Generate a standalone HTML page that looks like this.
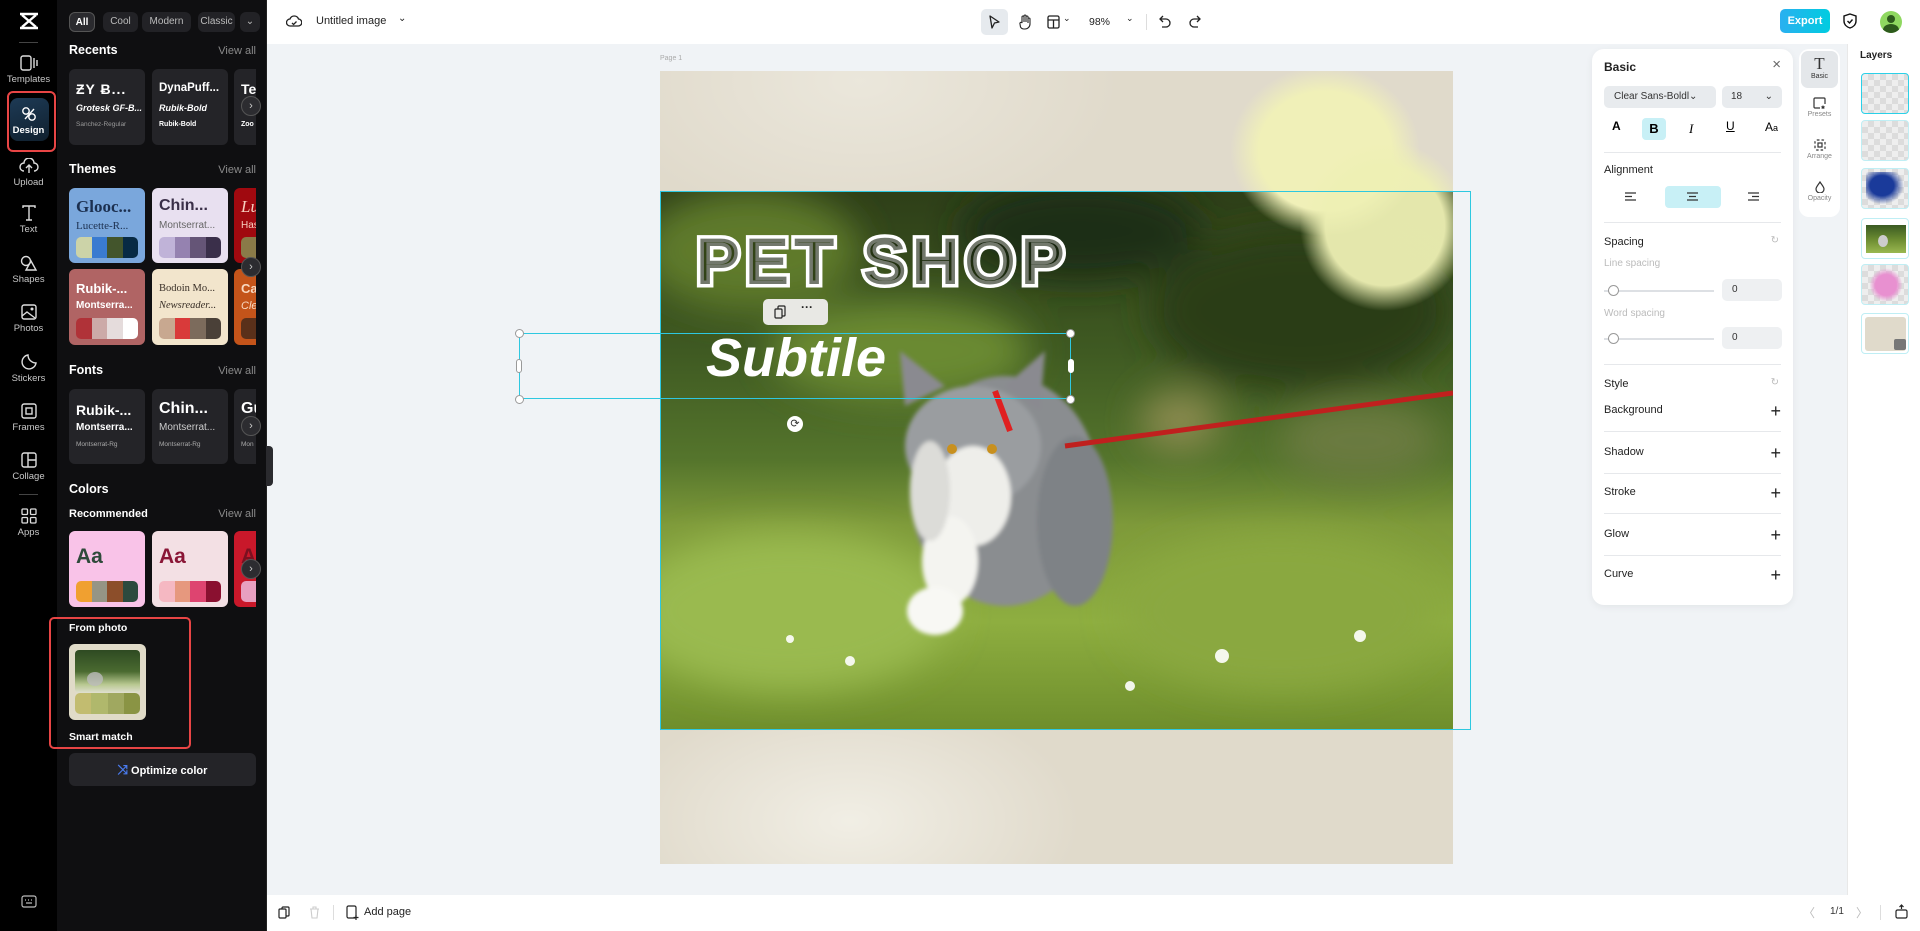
<!DOCTYPE html>
<html><head><meta charset="utf-8">
<style>
*{box-sizing:border-box;margin:0;padding:0}
body{width:1920px;height:931px;overflow:hidden;font-family:"Liberation Sans",sans-serif;background:#f0f3f6;position:relative}
.abs{position:absolute}
#rail{left:0;top:0;width:57px;height:931px;background:#000}
.ri{position:absolute;left:0;width:57px;text-align:center;color:#c8c8c8;font-size:9.5px}
.ri svg{display:block;margin:0 auto 3px}
#panel{left:57px;top:0;width:210px;height:931px;background:#0f0f11;border-right:1px solid #222}
.h{position:absolute;left:69px;color:#fff;font-weight:bold;font-size:12.5px}
.va{position:absolute;right:1664px;color:#8a8a8a;font-size:11px}
.clip{position:absolute;left:69px;width:187px;overflow:hidden}
.card{position:absolute;width:76px;border-radius:6px;overflow:hidden}
.sw{position:absolute;left:7px;right:7px;height:21px;border-radius:5px;overflow:hidden;display:flex}
.sw i{flex:1}
.nx{position:absolute;left:241px;width:20px;height:20px;border-radius:50%;background:#2c2c30;border:1px solid #555;color:#ccc;font-size:11px;text-align:center;line-height:18px}
.chip{position:absolute;top:12px;height:20px;border-radius:6px;background:#222226;color:#bbb;font-size:10px;line-height:20px;text-align:center}
#top{left:267px;top:0;width:1653px;height:44px;background:#fff}
#bottom{left:267px;top:895px;width:1653px;height:36px;background:#fff}
#props{left:1592px;top:49px;width:201px;height:556px;background:#fff;border-radius:12px;box-shadow:0 2px 8px rgba(0,0,0,.06)}
.pl{position:absolute;left:12px;font-size:11px;color:#222}
.dv{position:absolute;left:12px;right:12px;height:1px;background:#e6e8eb}
.plus{position:absolute;right:12px;font-size:18px;color:#222;font-weight:300;line-height:14px}
#tabs{left:1799px;top:49px;width:41px;height:168px;background:#fff;border-radius:10px}
.tb{position:absolute;left:0;width:41px;text-align:center;font-size:7px;color:#888}
#layers{left:1847px;top:44px;width:73px;height:851px;background:#fff;border-left:1px solid #e8e8e8}
.ly{position:absolute;left:13px;width:48px;height:41px;border-radius:4px;border:1px solid #bfeef4;overflow:hidden;
background-color:#eee;background-image:linear-gradient(45deg,#dcdcdc 25%,transparent 25%,transparent 75%,#dcdcdc 75%),linear-gradient(45deg,#dcdcdc 25%,transparent 25%,transparent 75%,#dcdcdc 75%);background-size:12px 12px;background-position:0 0,6px 6px}
</style></head><body>

<!-- RAIL -->
<div id="rail" class="abs">
  <div class="ri" style="top:12px"><svg width="22" height="18" viewBox="0 0 22 18"><path d="M2 2 L20 2 M2 16 L20 16 M4 3 Q11 9 18 15 M18 3 Q11 9 4 15" stroke="#fff" stroke-width="2.4" fill="none"/></svg></div>
  <div style="position:absolute;left:19px;top:42px;width:19px;height:1px;background:#444"></div>
  <div class="ri" style="top:55px"><svg width="18" height="16" viewBox="0 0 18 16"><rect x="1" y="1" width="10" height="14" rx="2" stroke="#ddd" fill="none" stroke-width="1.4"/><path d="M14 3v10M17 5v6" stroke="#ddd" stroke-width="1.4"/></svg>Templates</div>
  <div style="position:absolute;left:10px;top:98px;width:39px;height:43px;border-radius:8px;background:linear-gradient(160deg,#1d3a55,#10202e)"></div>
  <div style="position:absolute;left:7px;top:91px;width:49px;height:61px;border:2.5px solid #e84545;border-radius:6px"></div>
  <div class="ri" style="top:106px;color:#fff;font-weight:bold"><svg width="16" height="16" viewBox="0 0 16 16"><circle cx="5" cy="5" r="3.2" stroke="#fff" fill="none" stroke-width="1.4"/><circle cx="11" cy="11" r="3.2" stroke="#fff" fill="none" stroke-width="1.4"/><path d="M4 13 L13 3" stroke="#fff" stroke-width="1.4"/></svg>Design</div>
  <div class="ri" style="top:158px"><svg width="20" height="16" viewBox="0 0 20 16"><path d="M5 13 A4 4 0 0 1 5 5 A5 5 0 0 1 15 5 A4 4 0 0 1 15 13" stroke="#ddd" fill="none" stroke-width="1.4"/><path d="M10 15V8M7 10l3-3 3 3" stroke="#ddd" fill="none" stroke-width="1.4"/></svg>Upload</div>
  <div class="ri" style="top:205px"><svg width="16" height="16" viewBox="0 0 16 16"><path d="M2 3V1h12v2M8 1v14M5 15h6" stroke="#ddd" fill="none" stroke-width="1.4"/></svg>Text</div>
  <div class="ri" style="top:255px"><svg width="18" height="16" viewBox="0 0 18 16"><circle cx="6" cy="6" r="4.5" stroke="#ddd" fill="none" stroke-width="1.4"/><path d="M11 6 L16 15 H6 Z" stroke="#ddd" fill="none" stroke-width="1.4"/></svg>Shapes</div>
  <div class="ri" style="top:304px"><svg width="16" height="16" viewBox="0 0 16 16"><rect x="1" y="1" width="14" height="14" rx="2" stroke="#ddd" fill="none" stroke-width="1.4"/><path d="M1 12l5-4 8 6" stroke="#ddd" fill="none" stroke-width="1.4"/><circle cx="11" cy="5" r="1.5" fill="#ddd"/></svg>Photos</div>
  <div class="ri" style="top:354px"><svg width="16" height="16" viewBox="0 0 16 16"><path d="M15 9A7 7 0 1 1 7 1 A8 8 0 0 0 15 9Z" stroke="#ddd" fill="none" stroke-width="1.4"/></svg>Stickers</div>
  <div class="ri" style="top:403px"><svg width="16" height="16" viewBox="0 0 16 16"><rect x="1" y="1" width="14" height="14" rx="2" stroke="#ddd" fill="none" stroke-width="1.4"/><rect x="5" y="5" width="6" height="6" stroke="#ddd" fill="none" stroke-width="1.4"/></svg>Frames</div>
  <div class="ri" style="top:452px"><svg width="16" height="16" viewBox="0 0 16 16"><rect x="1" y="1" width="14" height="14" rx="2" stroke="#ddd" fill="none" stroke-width="1.4"/><path d="M7 1v14M7 8h8" stroke="#ddd" stroke-width="1.4"/></svg>Collage</div>
  <div style="position:absolute;left:19px;top:494px;width:19px;height:1px;background:#444"></div>
  <div class="ri" style="top:508px"><svg width="16" height="16" viewBox="0 0 16 16"><rect x="1" y="1" width="5.5" height="5.5" rx="1" stroke="#ddd" fill="none" stroke-width="1.3"/><rect x="9.5" y="1" width="5.5" height="5.5" rx="1" stroke="#ddd" fill="none" stroke-width="1.3"/><rect x="1" y="9.5" width="5.5" height="5.5" rx="1" stroke="#ddd" fill="none" stroke-width="1.3"/><rect x="9.5" y="9.5" width="5.5" height="5.5" rx="1" stroke="#ddd" fill="none" stroke-width="1.3"/></svg>Apps</div>
  <div class="ri" style="top:895px"><svg width="16" height="13" viewBox="0 0 16 13"><rect x="1" y="1" width="14" height="11" rx="2" stroke="#bbb" fill="none" stroke-width="1.2"/><path d="M4 5h1M7 5h1M10 5h1M5 8h6" stroke="#bbb" stroke-width="1.2"/></svg></div>
</div>

<!-- PANEL -->
<div id="panel" class="abs"></div>
<div class="chip" style="left:69px;width:26px;background:#2a2a2e;border:1px solid #555;color:#fff;font-weight:bold">All</div>
<div class="chip" style="left:103px;width:35px">Cool</div>
<div class="chip" style="left:142px;width:49px">Modern</div>
<div class="chip" style="left:198px;width:37px;overflow:hidden">Classic</div>
<div class="chip" style="left:240px;width:20px">⌄</div>

<div class="h" style="top:43px">Recents</div><div class="va" style="top:45px">View all</div>
<div class="clip" style="top:69px;height:77px">
  <div class="card" style="left:0;top:0;height:76px;background:#242428">
    <div class="abs" style="left:7px;top:12px;color:#fff;font-weight:bold;font-size:14px;letter-spacing:1px">ƵY Ƀ...</div>
    <div class="abs" style="left:7px;top:34px;color:#fff;font-weight:bold;font-style:italic;font-size:9px">Grotesk GF-B...</div>
    <div class="abs" style="left:7px;top:52px;color:#999;font-size:6.5px">Sanchez-Regular</div>
  </div>
  <div class="card" style="left:83px;top:0;height:76px;background:#242428">
    <div class="abs" style="left:7px;top:13px;color:#fff;font-weight:bold;font-size:11.5px">DynaPuff...</div>
    <div class="abs" style="left:7px;top:34px;color:#fff;font-weight:bold;font-style:italic;font-size:9px">Rubik-Bold</div>
    <div class="abs" style="left:7px;top:52px;color:#fff;font-weight:bold;font-size:7px">Rubik-Bold</div>
  </div>
  <div class="card" style="left:165px;top:0;height:76px;background:#242428">
    <div class="abs" style="left:7px;top:12px;color:#fff;font-weight:bold;font-size:14px">Te</div>
    <div class="abs" style="left:7px;top:52px;color:#fff;font-weight:bold;font-size:7px">Zoo</div>
  </div>
</div>
<div class="nx" style="top:96px">›</div>

<div class="h" style="top:162px">Themes</div><div class="va" style="top:164px">View all</div>
<div class="clip" style="top:188px;height:158px">
  <div class="card" style="left:0;top:0;height:75px;background:#7aa7dc">
    <div class="abs" style="left:7px;top:9px;color:#1c3050;font-family:'Liberation Serif',serif;font-weight:bold;font-size:17px">Glooc...</div>
    <div class="abs" style="left:7px;top:32px;color:#1c3050;font-family:'Liberation Serif',serif;font-size:11px">Lucette-R...</div>
    <div class="sw" style="top:49px"><i style="background:#ccd3a8"></i><i style="background:#3a7bd0"></i><i style="background:#43552c"></i><i style="background:#072a44"></i></div>
  </div>
  <div class="card" style="left:83px;top:0;height:75px;background:#e8e0f0">
    <div class="abs" style="left:7px;top:9px;color:#3a2f48;font-weight:bold;font-size:16px">Chin...</div>
    <div class="abs" style="left:7px;top:32px;color:#666;font-size:10px">Montserrat...</div>
    <div class="sw" style="top:49px"><i style="background:#c0b3d8"></i><i style="background:#9582b0"></i><i style="background:#655577"></i><i style="background:#3a2f4a"></i></div>
  </div>
  <div class="card" style="left:165px;top:0;height:75px;background:#a0090f">
    <div class="abs" style="left:7px;top:9px;color:#f6d0c0;font-family:'Liberation Serif',serif;font-style:italic;font-size:17px">Lu</div>
    <div class="abs" style="left:7px;top:32px;color:#f6d0c0;font-size:10px">Has</div>
    <div class="sw" style="top:49px"><i style="background:#8a7a48"></i></div>
  </div>
  <div class="card" style="left:0;top:81px;height:76px;background:#b06464">
    <div class="abs" style="left:7px;top:12px;color:#fff;font-weight:bold;font-size:13px">Rubik-...</div>
    <div class="abs" style="left:7px;top:31px;color:#fff;font-weight:bold;font-size:10px">Montserra...</div>
    <div class="sw" style="top:49px"><i style="background:#b03238"></i><i style="background:#ccaaa8"></i><i style="background:#e5dcdc"></i><i style="background:#fff"></i></div>
  </div>
  <div class="card" style="left:83px;top:81px;height:76px;background:#f2e5cc">
    <div class="abs" style="left:7px;top:14px;color:#3a3028;font-family:'Liberation Serif',serif;font-size:10.5px">Bodoin Mo...</div>
    <div class="abs" style="left:7px;top:31px;color:#3a3028;font-family:'Liberation Serif',serif;font-style:italic;font-size:10.5px">Newsreader...</div>
    <div class="sw" style="top:49px"><i style="background:#c8a890"></i><i style="background:#d93a3a"></i><i style="background:#7c6b5c"></i><i style="background:#4a4038"></i></div>
  </div>
  <div class="card" style="left:165px;top:81px;height:76px;background:#c4541a">
    <div class="abs" style="left:7px;top:12px;color:#f8d8c0;font-weight:bold;font-size:13px">Ca</div>
    <div class="abs" style="left:7px;top:31px;color:#f8d8c0;font-style:italic;font-size:11px">Cle</div>
    <div class="sw" style="top:49px"><i style="background:#5a301a"></i></div>
  </div>
</div>
<div class="nx" style="top:257px">›</div>

<div class="h" style="top:363px">Fonts</div><div class="va" style="top:365px">View all</div>
<div class="clip" style="top:389px;height:76px">
  <div class="card" style="left:0;top:0;height:75px;background:#242428">
    <div class="abs" style="left:7px;top:13px;color:#fff;font-weight:bold;font-size:14px">Rubik-...</div>
    <div class="abs" style="left:7px;top:33px;color:#fff;font-weight:bold;font-size:10px">Montserra...</div>
    <div class="abs" style="left:7px;top:52px;color:#aaa;font-size:6.5px">Montserrat-Rg</div>
  </div>
  <div class="card" style="left:83px;top:0;height:75px;background:#242428">
    <div class="abs" style="left:7px;top:11px;color:#fff;font-weight:bold;font-size:16px">Chin...</div>
    <div class="abs" style="left:7px;top:33px;color:#ccc;font-size:10px">Montserrat...</div>
    <div class="abs" style="left:7px;top:52px;color:#aaa;font-size:6.5px">Montserrat-Rg</div>
  </div>
  <div class="card" style="left:165px;top:0;height:75px;background:#242428">
    <div class="abs" style="left:7px;top:11px;color:#fff;font-weight:bold;font-size:16px">Gu</div>
    <div class="abs" style="left:7px;top:52px;color:#aaa;font-size:6.5px">Mon</div>
  </div>
</div>
<div class="nx" style="top:416px">›</div>

<div class="h" style="top:482px">Colors</div>
<div class="h" style="top:508px;font-size:11px">Recommended</div><div class="va" style="top:508px">View all</div>
<div class="clip" style="top:531px;height:77px">
  <div class="card" style="left:0;top:0;height:76px;background:#f9c3e8">
    <div class="abs" style="left:7px;top:14px;color:#2e4a3a;font-weight:bold;font-size:21px">Aa</div>
    <div class="sw" style="top:50px"><i style="background:#f0a030"></i><i style="background:#959585"></i><i style="background:#8c4e2a"></i><i style="background:#2c4a3e"></i></div>
  </div>
  <div class="card" style="left:83px;top:0;height:76px;background:#f3e0e4">
    <div class="abs" style="left:7px;top:14px;color:#8a1636;font-weight:bold;font-size:21px">Aa</div>
    <div class="sw" style="top:50px"><i style="background:#f5b8c2"></i><i style="background:#e6987e"></i><i style="background:#de4470"></i><i style="background:#8a1030"></i></div>
  </div>
  <div class="card" style="left:165px;top:0;height:76px;background:#c9182a">
    <div class="abs" style="left:7px;top:14px;color:#7a1020;font-weight:bold;font-size:21px">A</div>
    <div class="sw" style="top:50px"><i style="background:#e8a0c0"></i></div>
  </div>
</div>
<div class="nx" style="top:559px">›</div>

<div class="abs" style="left:49px;top:617px;width:142px;height:132px;border:2.5px solid #e84545;border-radius:5px"></div>
<div class="h" style="top:622px;font-size:10.5px">From photo</div>
<div class="abs" style="left:69px;top:644px;width:77px;height:76px;border-radius:6px;background:#e0dbc8;overflow:hidden">
  <div class="abs" style="left:6px;top:6px;width:65px;height:43px;border-radius:4px;background:linear-gradient(180deg,#2e4a22 0%,#4a6a30 50%,#b8c890 80%,#e0e0d0 100%)"></div>
  <div class="abs" style="left:18px;top:28px;width:16px;height:14px;border-radius:50%;background:#bbb;opacity:.8"></div>
  <div class="sw" style="top:49px;left:6px;right:6px"><i style="background:#c2bc70"></i><i style="background:#b0b86c"></i><i style="background:#a0a860"></i><i style="background:#8a9444"></i></div>
</div>
<div class="h" style="top:731px;font-size:10.5px">Smart match</div>
<div class="abs" style="left:69px;top:753px;width:187px;height:33px;border-radius:6px;background:#242428;color:#fff;font-weight:bold;font-size:11px;text-align:center;line-height:33px"><span style="color:#4a7cf0;font-size:13px">⤨</span> Optimize color</div>
<div class="abs" style="left:266px;top:446px;width:7px;height:40px;background:#2a2a2e;border-radius:0 4px 4px 0"></div>

<!-- TOP BAR -->
<div id="top" class="abs"></div>
<svg class="abs" style="left:286px;top:13px" width="16" height="16" viewBox="0 0 16 16"><path d="M4 13A3.5 3.5 0 0 1 4 6 A4.5 4.5 0 0 1 12.5 6 A3.5 3.5 0 0 1 12 13Z" stroke="#222" fill="none" stroke-width="1.3"/><path d="M6 10l1.6 1.5L10.5 8.5" stroke="#222" fill="none" stroke-width="1.3"/></svg>
<div class="abs" style="left:316px;top:15px;font-size:11px;color:#222">Untitled image</div>
<div class="abs" style="left:398px;top:13px;font-size:10px;color:#222">⌄</div>
<div class="abs" style="left:981px;top:9px;width:27px;height:26px;border-radius:5px;background:#e6eaee"></div>
<svg class="abs" style="left:988px;top:15px" width="13" height="14" viewBox="0 0 13 14"><path d="M2 1 L11 7 L6.5 8 L4 13 Z" stroke="#222" fill="none" stroke-width="1.3" stroke-linejoin="round"/></svg>
<svg class="abs" style="left:1018px;top:14px" width="14" height="16" viewBox="0 0 14 16"><path d="M4 9V3a1 1 0 0 1 2 0v5V2a1 1 0 0 1 2 0v6V3a1 1 0 0 1 2 0v6V5a1 1 0 0 1 2 0v5a5 5 0 0 1-5 5h-1a4 4 0 0 1-3.5-2L2 10a1 1 0 0 1 2-1z" stroke="#222" fill="none" stroke-width="1.1"/></svg>
<svg class="abs" style="left:1047px;top:15px" width="13" height="14" viewBox="0 0 13 14"><rect x="1" y="1" width="11" height="12" rx="1.5" stroke="#222" fill="none" stroke-width="1.3"/><path d="M1 5h11M6.5 5v8" stroke="#222" stroke-width="1.3"/></svg>
<div class="abs" style="left:1063px;top:13px;font-size:9px;color:#222">⌄</div>
<div class="abs" style="left:1089px;top:16px;font-size:10.5px;color:#222">98%</div>
<div class="abs" style="left:1126px;top:13px;font-size:9px;color:#222">⌄</div>
<div class="abs" style="left:1146px;top:14px;width:1px;height:16px;background:#ddd"></div>
<svg class="abs" style="left:1159px;top:15px" width="12" height="14" viewBox="0 0 12 14"><path d="M4 1L1 4l3 3M1 4h6a4 4 0 0 1 0 8H3" stroke="#222" fill="none" stroke-width="1.3"/></svg>
<svg class="abs" style="left:1189px;top:15px" width="12" height="14" viewBox="0 0 12 14"><path d="M8 1l3 3-3 3M11 4H5a4 4 0 0 0 0 8h4" stroke="#222" fill="none" stroke-width="1.3"/></svg>
<div class="abs" style="left:1780px;top:9px;width:50px;height:24px;border-radius:5px;background:linear-gradient(90deg,#2ab0f0,#00cce0);color:#fff;font-weight:bold;font-size:11px;text-align:center;line-height:24px">Export</div>
<svg class="abs" style="left:1843px;top:13px" width="14" height="16" viewBox="0 0 14 16"><path d="M7 1L13 3v5c0 3.5-2.7 6-6 7C3.7 14 1 11.5 1 8V3z" stroke="#111" fill="none" stroke-width="1.4"/><path d="M4.5 8l2 2 3-3.5" stroke="#111" fill="none" stroke-width="1.4"/></svg>
<div class="abs" style="left:1880px;top:11px;width:22px;height:22px;border-radius:50%;background:#8fd860;overflow:hidden">
  <div class="abs" style="left:7px;top:4px;width:8px;height:8px;border-radius:50%;background:#2d5a1c"></div>
  <div class="abs" style="left:3px;top:13px;width:16px;height:12px;border-radius:50%;background:#2d5a1c"></div>
</div>

<!-- CANVAS -->
<div class="abs" style="left:660px;top:55px;font-size:7px;color:#aaa">Page 1</div>
<div class="abs" style="left:660px;top:71px;width:793px;height:793px;background:#e0dacb;overflow:hidden">
  <div class="abs" style="left:-60px;top:-140px;width:520px;height:300px;border-radius:50%;background:radial-gradient(closest-side,rgba(255,255,250,.35),rgba(255,255,250,0))"></div>
  <div class="abs" style="left:-40px;top:620px;width:460px;height:260px;border-radius:50%;background:radial-gradient(closest-side,rgba(255,255,250,.55),rgba(255,255,250,0))"></div>
  <svg class="abs" style="left:0;top:120px" width="793" height="539" viewBox="0 0 793 539">
    <defs>
      <linearGradient id="bg" x1="0" y1="0" x2="0" y2="1">
        <stop offset="0" stop-color="#2e3f18"/><stop offset=".3" stop-color="#3f5a22"/><stop offset=".5" stop-color="#55752c"/><stop offset=".62" stop-color="#7e9a3a"/><stop offset=".8" stop-color="#8eae40"/><stop offset="1" stop-color="#6e8e2c"/>
      </linearGradient>
      <filter id="b1" x="-50%" y="-50%" width="200%" height="200%"><feGaussianBlur stdDeviation="18"/></filter>
      <filter id="b2"><feGaussianBlur stdDeviation="2"/></filter>
    </defs>
    <rect width="793" height="539" fill="url(#bg)"/>
    <g filter="url(#b1)">
      <ellipse cx="90" cy="60" rx="110" ry="60" fill="#5e7a2a"/>
      <ellipse cx="420" cy="40" rx="120" ry="50" fill="#1e2e12"/>
      <ellipse cx="640" cy="120" rx="150" ry="80" fill="#2a3e18"/>
      <ellipse cx="240" cy="160" rx="130" ry="50" fill="#6a8a30"/>
      <ellipse cx="700" cy="250" rx="80" ry="40" fill="#6a7a40"/>
      <ellipse cx="520" cy="230" rx="40" ry="30" fill="#8a8a50"/>
      <ellipse cx="130" cy="420" rx="160" ry="80" fill="#9aba50"/>
      <ellipse cx="620" cy="420" rx="160" ry="80" fill="#8aa840"/>
    </g>
    <g filter="url(#b2)">
      <ellipse cx="345" cy="300" rx="95" ry="115" fill="#8a8d90"/>
      <ellipse cx="313" cy="255" rx="68" ry="60" fill="#9a9da0"/>
      <path d="M245 215 L240 160 L285 195Z M345 195 L385 160 L380 220Z" fill="#8a8a90"/>
      <ellipse cx="313" cy="305" rx="38" ry="50" fill="#eeeeea"/>
      <ellipse cx="290" cy="370" rx="28" ry="45" fill="#f4f4f0"/>
      <ellipse cx="270" cy="300" rx="20" ry="50" fill="#dcdcd8"/>
      <ellipse cx="415" cy="330" rx="38" ry="85" fill="#7e8286"/>
      <ellipse cx="275" cy="420" rx="28" ry="24" fill="#f8f8f4"/>
    </g>
    <circle cx="292" cy="258" r="5" fill="#c8901e"/><circle cx="332" cy="258" r="5" fill="#c8901e"/>
    <path d="M405 255 L793 202" stroke="#c0201e" stroke-width="5"/>
    <path d="M335 200 L350 240" stroke="#e02020" stroke-width="6"/>
    <g fill="#fff" opacity=".9"><circle cx="700" cy="445" r="6"/><circle cx="562" cy="465" r="7"/><circle cx="130" cy="448" r="4"/><circle cx="190" cy="470" r="5"/><circle cx="470" cy="495" r="5"/></g>
  </svg>
  <div class="abs" style="left:570px;top:-5px;width:190px;height:170px;border-radius:50%;background:radial-gradient(closest-side,#f0f0b8 70%,rgba(240,240,184,0))"></div>
  <div class="abs" style="left:640px;top:70px;width:170px;height:170px;border-radius:50%;background:radial-gradient(closest-side,rgba(238,240,180,.95) 70%,rgba(238,240,180,0))"></div>
  <div class="abs" style="left:36px;top:152px;font-family:'Liberation Sans',sans-serif;font-weight:900;font-size:66px;letter-spacing:5px;color:rgba(20,30,10,.6);-webkit-text-stroke:7px #fff;paint-order:stroke fill;line-height:76px;white-space:nowrap">PET SHOP</div>
  <div class="abs" style="left:46px;top:254px;font-weight:bold;font-style:italic;font-size:54px;color:#fff;line-height:66px">Subtile</div>
</div>
<!-- selection boxes -->
<div class="abs" style="left:660px;top:191px;width:811px;height:539px;border:1.5px solid #2ec8e0"></div>
<div class="abs" style="left:519px;top:333px;width:552px;height:66px;border:1.5px solid #2ec8e0"></div>
<div class="abs" style="left:515px;top:329px;width:9px;height:9px;border-radius:50%;background:#fff;border:1px solid #999"></div>
<div class="abs" style="left:1066px;top:329px;width:9px;height:9px;border-radius:50%;background:#fff;border:1px solid #999"></div>
<div class="abs" style="left:515px;top:395px;width:9px;height:9px;border-radius:50%;background:#fff;border:1px solid #999"></div>
<div class="abs" style="left:1066px;top:395px;width:9px;height:9px;border-radius:50%;background:#fff;border:1px solid #999"></div>
<div class="abs" style="left:516px;top:359px;width:6px;height:14px;border-radius:3px;background:#fff;border:1px solid #999"></div>
<div class="abs" style="left:1068px;top:359px;width:6px;height:14px;border-radius:3px;background:#fff;border:1px solid #fff"></div>
<div class="abs" style="left:763px;top:299px;width:65px;height:26px;border-radius:5px;background:#e8e8e4"></div>
<svg class="abs" style="left:774px;top:305px" width="12" height="14" viewBox="0 0 12 14"><rect x="1" y="4" width="7" height="9" rx="1" stroke="#222" fill="none" stroke-width="1.2"/><path d="M4 4V2a1 1 0 0 1 1-1h5a1 1 0 0 1 1 1v8a1 1 0 0 1-1 1H8" stroke="#222" fill="none" stroke-width="1.2"/></svg>
<div class="abs" style="left:801px;top:300px;font-size:12px;color:#222;font-weight:bold">···</div>
<div class="abs" style="left:787px;top:416px;width:16px;height:16px;border-radius:50%;background:#fff;color:#333;font-size:11px;text-align:center;line-height:16px">⟳</div>

<!-- PROPERTIES -->
<div id="props" class="abs">
  <div class="pl" style="top:11px;font-weight:bold;font-size:12px">Basic</div>
  <div class="abs" style="right:12px;top:7px;font-size:15px;color:#666">×</div>
  <div class="abs" style="left:12px;top:37px;width:112px;height:22px;border-radius:5px;background:#e8ebee;font-size:10px;color:#333;line-height:22px;padding-left:10px">Clear Sans-Boldl⌄</div>
  <div class="abs" style="left:130px;top:37px;width:60px;height:22px;border-radius:5px;background:#e8ebee;font-size:10px;color:#333;line-height:22px;padding-left:9px">18<span style="position:absolute;right:9px">⌄</span></div>
  <div class="abs" style="left:20px;top:70px;font-size:12px;font-weight:bold">A</div>
  <div class="abs" style="left:50px;top:69px;width:24px;height:22px;border-radius:4px;background:#c8f0f6;font-size:13px;font-weight:bold;text-align:center;line-height:22px">B</div>
  <div class="abs" style="left:97px;top:72px;font-size:13px;font-style:italic;font-family:'Liberation Serif',serif">I</div>
  <div class="abs" style="left:134px;top:70px;font-size:12px;text-decoration:underline">U</div>
  <div class="abs" style="left:173px;top:71px;font-size:12px">A<span style="font-size:9px">a</span></div>
  <div class="dv" style="top:103px"></div>
  <div class="pl" style="top:115px">Alignment</div>
  <div class="abs" style="left:73px;top:137px;width:56px;height:22px;border-radius:4px;background:#c8f0f6"></div>
  <svg class="abs" style="left:33px;top:143px" width="11" height="9"><path d="M0 1h11M0 4.5h7M0 8h11" stroke="#333" stroke-width="1.2"/></svg>
  <svg class="abs" style="left:95px;top:143px" width="11" height="9"><path d="M0 1h11M2 4.5h7M0 8h11" stroke="#333" stroke-width="1.2"/></svg>
  <svg class="abs" style="left:156px;top:143px" width="11" height="9"><path d="M0 1h11M4 4.5h7M0 8h11" stroke="#333" stroke-width="1.2"/></svg>
  <div class="dv" style="top:173px"></div>
  <div class="pl" style="top:187px">Spacing</div>
  <div class="abs" style="right:14px;top:186px;font-size:10px;color:#bbb">↻</div>
  <div class="pl" style="top:209px;color:#bbb;font-size:10px">Line spacing</div>
  <div class="abs" style="left:12px;top:241px;width:110px;height:1.5px;background:#dde0e4"></div>
  <div class="abs" style="left:16px;top:236px;width:11px;height:11px;border-radius:50%;background:#fff;border:1px solid #999"></div>
  <div class="abs" style="left:130px;top:230px;width:60px;height:22px;border-radius:5px;background:#eef0f2;font-size:10px;line-height:22px;padding-left:10px;color:#333">0</div>
  <div class="pl" style="top:259px;color:#bbb;font-size:10px">Word spacing</div>
  <div class="abs" style="left:12px;top:289px;width:110px;height:1.5px;background:#dde0e4"></div>
  <div class="abs" style="left:16px;top:284px;width:11px;height:11px;border-radius:50%;background:#fff;border:1px solid #999"></div>
  <div class="abs" style="left:130px;top:278px;width:60px;height:22px;border-radius:5px;background:#eef0f2;font-size:10px;line-height:22px;padding-left:10px;color:#333">0</div>
  <div class="dv" style="top:315px"></div>
  <div class="pl" style="top:329px">Style</div>
  <div class="abs" style="right:14px;top:328px;font-size:10px;color:#bbb">↻</div>
  <div class="pl" style="top:355px">Background</div><div class="plus" style="top:355px">+</div>
  <div class="dv" style="top:382px"></div>
  <div class="pl" style="top:397px">Shadow</div><div class="plus" style="top:397px">+</div>
  <div class="dv" style="top:424px"></div>
  <div class="pl" style="top:437px">Stroke</div><div class="plus" style="top:437px">+</div>
  <div class="dv" style="top:464px"></div>
  <div class="pl" style="top:479px">Glow</div><div class="plus" style="top:479px">+</div>
  <div class="dv" style="top:506px"></div>
  <div class="pl" style="top:519px">Curve</div><div class="plus" style="top:519px">+</div>
</div>

<div id="tabs" class="abs">
  <div class="abs" style="left:2px;top:2px;width:37px;height:37px;border-radius:7px;background:#e4e7ea"></div>
  <div class="tb" style="top:5px;color:#333"><div style="font-family:'Liberation Serif',serif;font-size:17px;line-height:19px">T</div>Basic</div>
  <div class="tb" style="top:48px"><svg width="13" height="12" viewBox="0 0 13 12"><path d="M7 11H2a1 1 0 0 1-1-1V2a1 1 0 0 1 1-1h9a1 1 0 0 1 1 1v5" stroke="#333" fill="none" stroke-width="1.2"/><path d="M10 8l.7 1.4 1.5.2-1.1 1 .3 1.5-1.4-.7-1.4.7.3-1.5-1.1-1 1.5-.2z" fill="#333"/></svg><br>Presets</div>
  <div class="tb" style="top:90px"><svg width="12" height="12" viewBox="0 0 12 12"><rect x="1" y="1" width="10" height="10" rx="2" stroke="#333" fill="none" stroke-width="1.2" stroke-dasharray="2.5 2"/><rect x="4" y="4" width="4" height="4" stroke="#333" fill="none" stroke-width="1.2"/></svg><br>Arrange</div>
  <div class="tb" style="top:132px"><svg width="10" height="12" viewBox="0 0 10 12"><path d="M5 1C3 4 1 6 1 8a4 4 0 0 0 8 0C9 6 7 4 5 1Z" stroke="#333" fill="none" stroke-width="1.2"/></svg><br>Opacity</div>
</div>

<!-- LAYERS -->
<div id="layers" class="abs">
  <div class="abs" style="left:12px;top:6px;font-size:10px;font-weight:bold;color:#222">Layers</div>
  <div class="ly" style="top:29px;border:1.5px solid #2ad0e8"></div>
  <div class="ly" style="top:76px"></div>
  <div class="ly" style="top:124px"><div class="abs" style="left:4px;top:3px;width:40px;height:34px;background:radial-gradient(ellipse at 40% 40%,#1a3a9a 35%,rgba(30,60,160,0) 65%)"></div></div>
  <div class="ly" style="top:174px;background:#fff"><div class="abs" style="left:4px;top:6px;width:40px;height:28px;background:linear-gradient(180deg,#3a5a22,#6a8a30 50%,#9ab850)"></div><div class="abs" style="left:16px;top:16px;width:10px;height:12px;border-radius:50%;background:#ccc"></div></div>
  <div class="ly" style="top:220px"><div class="abs" style="left:8px;top:3px;width:32px;height:34px;border-radius:50%;background:radial-gradient(circle,#e890d0 45%,rgba(232,144,208,0) 72%)"></div></div>
  <div class="ly" style="top:269px;background:#fff"><div class="abs" style="left:3px;top:3px;width:41px;height:34px;border-radius:3px;background:#e0dacb"></div><div class="abs" style="left:32px;top:25px;width:12px;height:11px;border-radius:2px;background:#777"></div></div>
</div>

<!-- BOTTOM -->
<div id="bottom" class="abs"></div>
<svg class="abs" style="left:278px;top:906px" width="12" height="13" viewBox="0 0 12 13"><rect x="1" y="3" width="7" height="9" rx="1" stroke="#222" fill="none" stroke-width="1.2"/><path d="M4 3V2a1 1 0 0 1 1-1h5a1 1 0 0 1 1 1v7a1 1 0 0 1-1 1H8" stroke="#222" fill="none" stroke-width="1.2"/></svg>
<svg class="abs" style="left:309px;top:906px" width="11" height="13" viewBox="0 0 11 13"><path d="M1 3h9M4 3V1h3v2M2 3l1 9h5l1-9" stroke="#ccc" fill="none" stroke-width="1.1"/></svg>
<div class="abs" style="left:333px;top:905px;width:1px;height:15px;background:#ddd"></div>
<svg class="abs" style="left:346px;top:905px" width="13" height="15" viewBox="0 0 13 15"><rect x="1" y="1" width="9" height="12" rx="1.5" stroke="#222" fill="none" stroke-width="1.2"/><path d="M10 10v5M7.5 12.5h5" stroke="#222" stroke-width="1.2"/></svg>
<div class="abs" style="left:364px;top:906px;font-size:11px;color:#222">Add page</div>
<div class="abs" style="left:1803px;top:904px;font-size:12px;color:#bbb">〈</div>
<div class="abs" style="left:1830px;top:906px;font-size:10px;color:#333">1/1</div>
<div class="abs" style="left:1856px;top:904px;font-size:12px;color:#bbb">〉</div>
<div class="abs" style="left:1880px;top:905px;width:1px;height:15px;background:#ddd"></div>
<svg class="abs" style="left:1895px;top:904px" width="13" height="15" viewBox="0 0 13 15"><rect x="1" y="6" width="11" height="8" rx="1.5" stroke="#222" fill="none" stroke-width="1.2"/><path d="M6.5 1v4M4.5 3l2-2 2 2" stroke="#222" fill="none" stroke-width="1.2"/></svg>
</body></html>
